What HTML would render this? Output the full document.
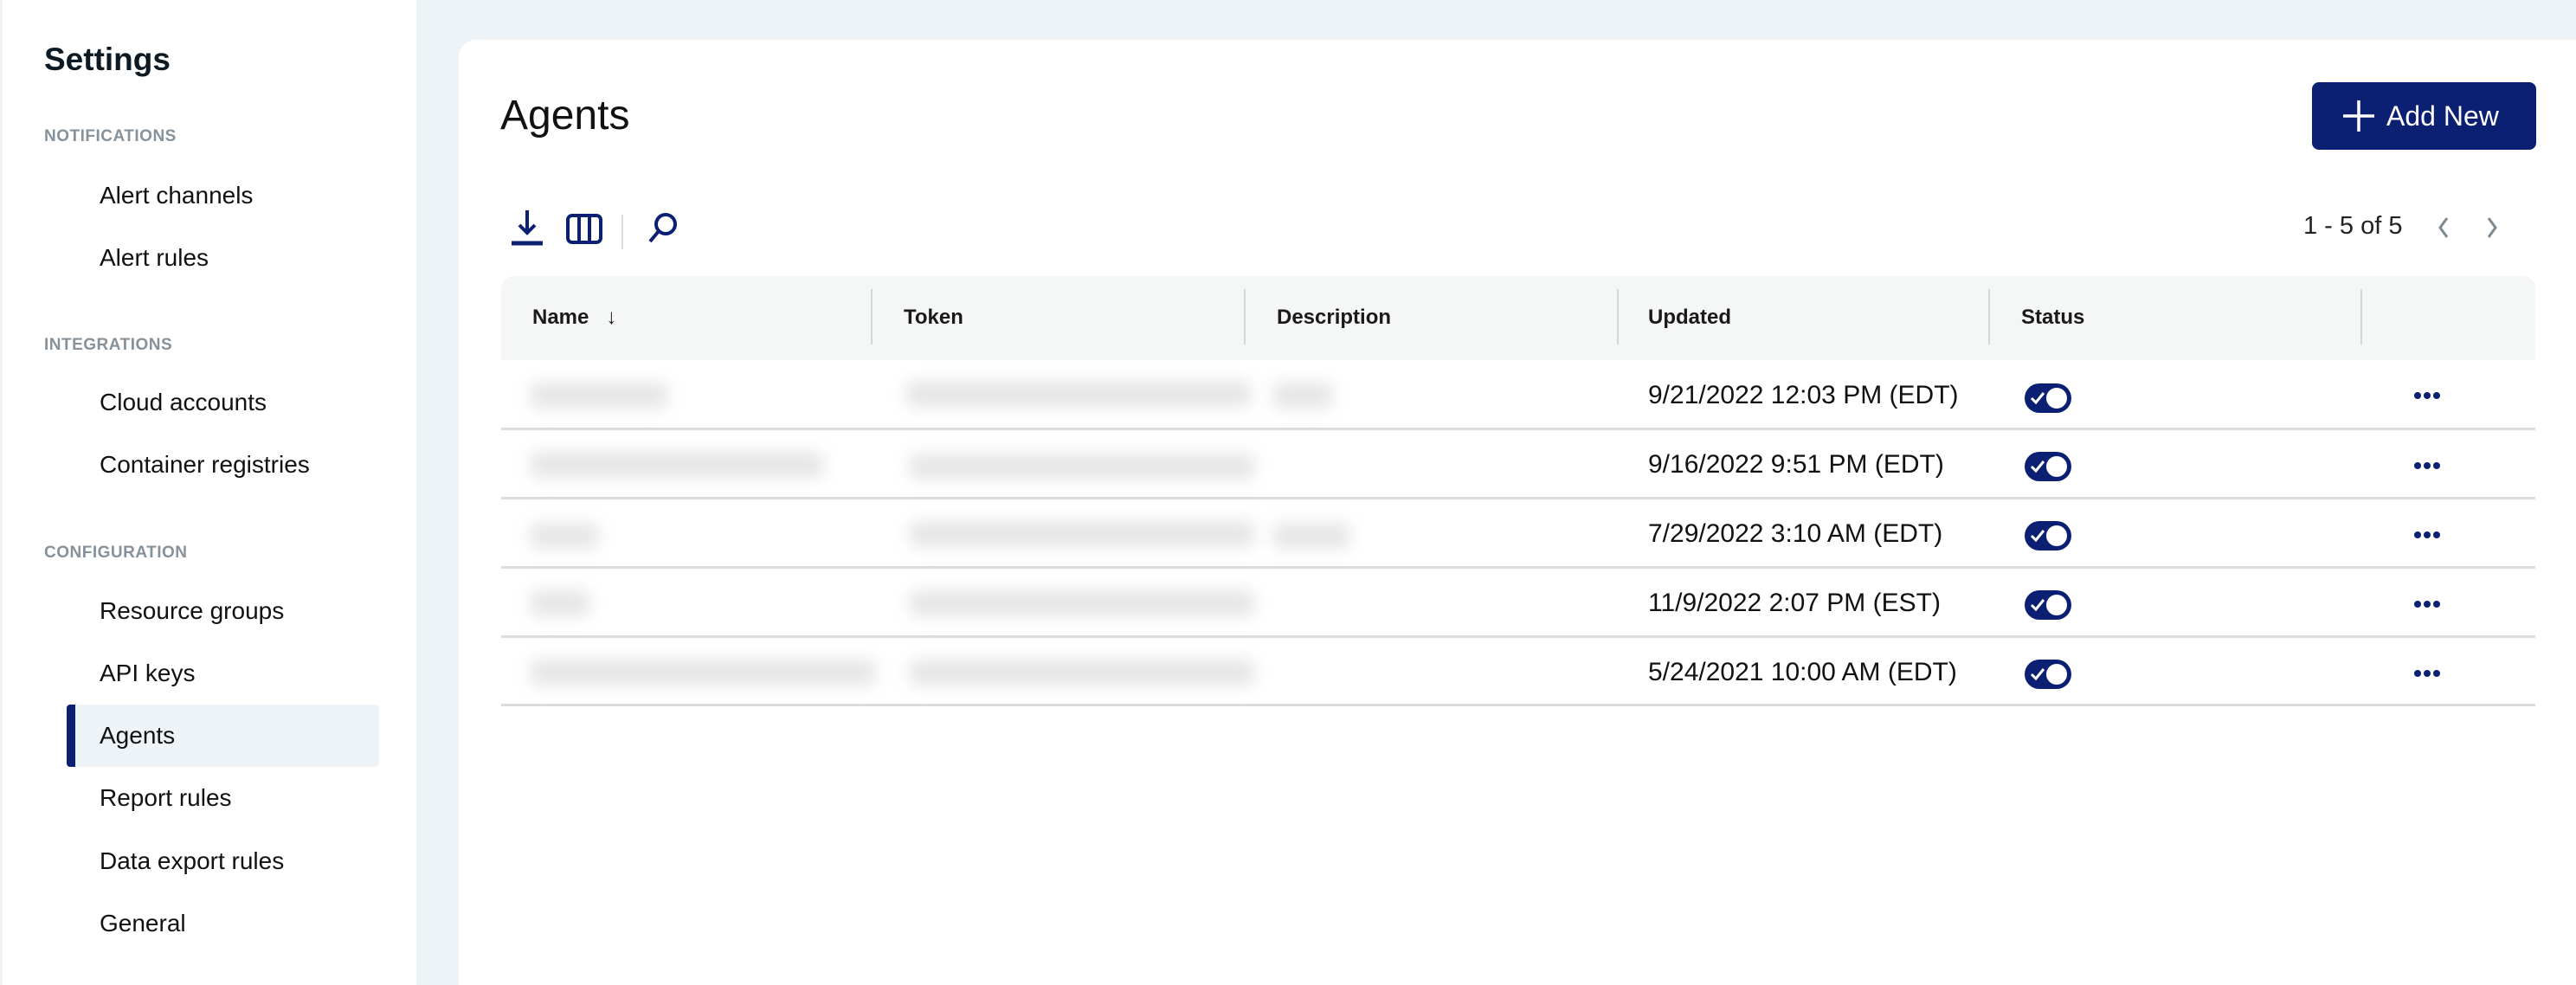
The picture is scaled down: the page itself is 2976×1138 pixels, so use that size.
<!DOCTYPE html>
<html><head><meta charset="utf-8"><style>
*{box-sizing:border-box;margin:0;padding:0}
html,body{width:2976px;height:1138px;overflow:hidden}
body{background:#eef3f7;font-family:"Liberation Sans",sans-serif;color:#111;position:relative}
.side{position:absolute;left:0;top:0;width:481px;height:1138px;background:#fff;border-left:3px solid #eef3f7}
.side .t{position:absolute;left:48px;top:48px;font-size:37px;font-weight:bold;color:#0d1a24}
.sec{position:absolute;left:48px;font-size:19px;font-weight:bold;color:#86919a;letter-spacing:.5px}
.it{position:absolute;left:112px;font-size:28px;color:#111;line-height:34px}
.active{position:absolute;left:74px;top:814px;width:361px;height:72px;background:#eef3f8;border-radius:4px;border-left:10px solid #0b1f73}
.card{position:absolute;left:530px;top:46px;width:2460px;height:1092px;background:#fff;border-radius:20px 0 0 0}
.abs{position:absolute}
.th{position:absolute;top:319px;height:97px;left:579px;width:2350px;background:#f5f7f6;border-radius:14px 14px 0 0}
.hl{position:absolute;font-size:24px;font-weight:bold;color:#1a1a1a;top:353px}
.sep{position:absolute;top:334px;width:2px;height:64px;background:#d6d8d8}
.rl{position:absolute;left:579px;width:2350px;height:3px;background:#dcdcdc}
.bl{position:absolute;background:#e6e6e6;filter:blur(9px);border-radius:10px;height:30px}
.up{position:absolute;left:1904px;width:358px;overflow:hidden;white-space:nowrap;font-size:30px;color:#111}
.tg{position:absolute;left:2339px;width:54px;height:34px;background:#0b1f73;border-radius:17px}
.tg:after{content:"";position:absolute;right:5px;top:5px;width:24px;height:24px;border-radius:50%;background:#fff}
.tg svg{position:absolute;left:6px;top:9px}
</style></head><body>
<div class="side">
<div class="t">Settings</div>
<div class="sec" style="top:147px">NOTIFICATIONS</div>
<div class="it" style="top:209px">Alert channels</div>
<div class="it" style="top:281px">Alert rules</div>
<div class="sec" style="top:388px">INTEGRATIONS</div>
<div class="it" style="top:448px">Cloud accounts</div>
<div class="it" style="top:520px">Container registries</div>
<div class="sec" style="top:628px">CONFIGURATION</div>
<div class="it" style="top:689px">Resource groups</div>
<div class="it" style="top:761px">API keys</div>
<div class="active"></div>
<div class="it" style="top:833px">Agents</div>
<div class="it" style="top:905px">Report rules</div>
<div class="it" style="top:978px">Data export rules</div>
<div class="it" style="top:1050px">General</div>
</div>
<div class="card"></div>
<div class="abs" style="left:578px;top:106px;font-size:48px;color:#111">Agents</div>
<div class="abs" style="left:2671px;top:95px;width:259px;height:78px;background:#0b1f73;border-radius:8px;color:#fff;font-size:32px;line-height:78px">
<svg class="abs" style="left:36px;top:21px" width="36" height="36"><path d="M18 0V36M0 18H36" stroke="#fff" stroke-width="3.5"/></svg>
<span class="abs" style="left:86px">Add New</span></div>
<svg class="abs" style="left:580px;top:238px" width="220" height="54" viewBox="0 0 220 54">
<g fill="none" stroke="#0b1f73" stroke-width="4">
<path d="M29 5V31M20 22L29 31L38 22"/><path d="M11 43H47" stroke-width="5"/>
<rect x="76" y="11" width="38" height="31" rx="5"/><path d="M89 11V42M101 11V42"/>
<circle cx="189" cy="21" r="11"/><path d="M181 29L171 41"/>
</g><path d="M139 10V50" stroke="#ddd" stroke-width="2"/></svg>
<div class="abs" style="left:2661px;top:245px;font-size:29px;color:#222">1 - 5 of 5</div>
<svg class="abs" style="left:2811px;top:248px" width="80" height="30"><g fill="none" stroke="#7d8a92" stroke-width="3"><path d="M16 4L8 15L16 26M64 4L72 15L64 26"/></g></svg>
<div class="th"></div>
<div class="hl" style="left:615px">Name&nbsp;&nbsp;&nbsp;↓</div>
<div class="hl" style="left:1044px">Token</div>
<div class="hl" style="left:1475px">Description</div>
<div class="hl" style="left:1904px">Updated</div>
<div class="hl" style="left:2335px">Status</div>
<div class="sep" style="left:1006px"></div><div class="sep" style="left:1437px"></div><div class="sep" style="left:1868px"></div><div class="sep" style="left:2297px"></div><div class="sep" style="left:2727px"></div>
<div class="rl" style="top:494px"></div><div class="rl" style="top:574px"></div><div class="rl" style="top:654px"></div><div class="rl" style="top:734px"></div><div class="rl" style="top:813px"></div>
<div class="bl" style="left:612px;top:442px;width:160px"></div>
<div class="bl" style="left:1046px;top:440px;width:400px"></div>
<div class="bl" style="left:1470px;top:442px;width:70px"></div>
<div class="bl" style="left:612px;top:522px;width:340px"></div>
<div class="bl" style="left:1050px;top:524px;width:400px"></div>
<div class="bl" style="left:612px;top:604px;width:80px"></div>
<div class="bl" style="left:1050px;top:602px;width:400px"></div>
<div class="bl" style="left:1470px;top:604px;width:90px"></div>
<div class="bl" style="left:612px;top:682px;width:70px"></div>
<div class="bl" style="left:1050px;top:682px;width:400px"></div>
<div class="bl" style="left:612px;top:762px;width:400px"></div>
<div class="bl" style="left:1050px;top:762px;width:400px"></div>
<div class="up" style="top:440px">9/21/2022 12:03 PM (EDT)</div>
<div class="up" style="top:520px">9/16/2022 9:51 PM (EDT)</div>
<div class="up" style="top:600px">7/29/2022 3:10 AM (EDT)</div>
<div class="up" style="top:680px">11/9/2022 2:07 PM (EST)</div>
<div class="up" style="top:760px">5/24/2021 10:00 AM (EDT)</div>
<div class="tg" style="top:443px"><svg width="18" height="16"><path d="M2 8L7 13L16 2" fill="none" stroke="#fff" stroke-width="3"/></svg></div>
<div class="tg" style="top:522px"><svg width="18" height="16"><path d="M2 8L7 13L16 2" fill="none" stroke="#fff" stroke-width="3"/></svg></div>
<div class="tg" style="top:602px"><svg width="18" height="16"><path d="M2 8L7 13L16 2" fill="none" stroke="#fff" stroke-width="3"/></svg></div>
<div class="tg" style="top:682px"><svg width="18" height="16"><path d="M2 8L7 13L16 2" fill="none" stroke="#fff" stroke-width="3"/></svg></div>
<div class="tg" style="top:762px"><svg width="18" height="16"><path d="M2 8L7 13L16 2" fill="none" stroke="#fff" stroke-width="3"/></svg></div>
<svg class="abs" style="left:2788px;top:450px" width="34" height="340"><g fill="#0b1f73">
<circle cx="5" cy="7" r="4"/><circle cx="16" cy="7" r="4"/><circle cx="27" cy="7" r="4"/>
<circle cx="5" cy="88" r="4"/><circle cx="16" cy="88" r="4"/><circle cx="27" cy="88" r="4"/>
<circle cx="5" cy="168" r="4"/><circle cx="16" cy="168" r="4"/><circle cx="27" cy="168" r="4"/>
<circle cx="5" cy="248" r="4"/><circle cx="16" cy="248" r="4"/><circle cx="27" cy="248" r="4"/>
<circle cx="5" cy="328" r="4"/><circle cx="16" cy="328" r="4"/><circle cx="27" cy="328" r="4"/>
</g></svg>
</body></html>
